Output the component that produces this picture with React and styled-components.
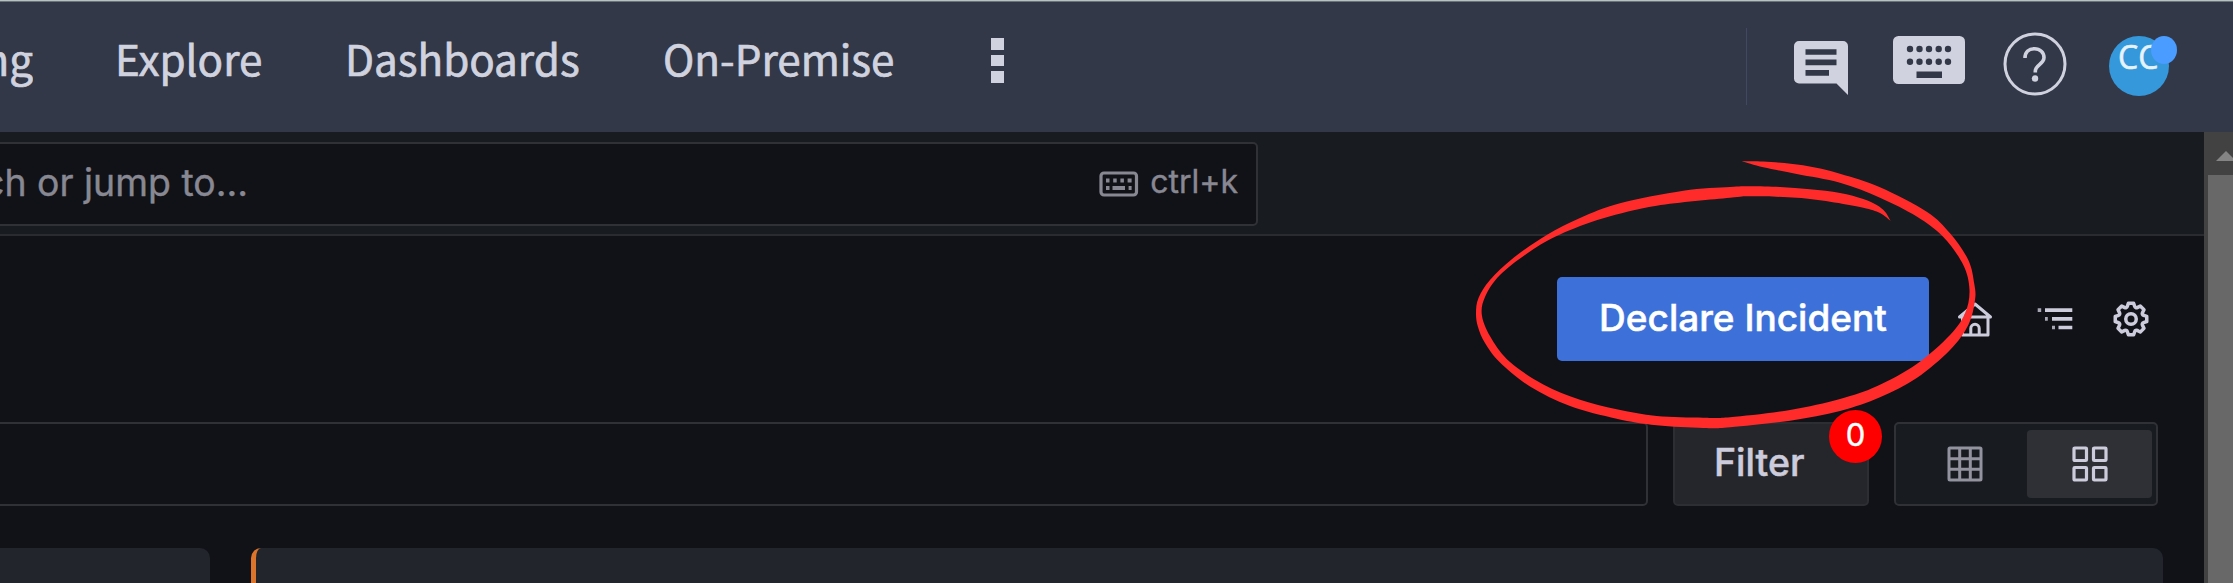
import React from 'react';
import styled, { createGlobalStyle } from 'styled-components';

const GlobalStyle = createGlobalStyle`
  *, *::before, *::after { box-sizing: border-box; }
  body { margin: 0; background: #111217; overflow: hidden; }
`;

const Page = styled.div`
  position: relative;
  display: flex;
  flex-direction: column;
  width: 2233px;
  height: 583px;
  overflow: hidden;
  background: #111217;
  font-family: Inter, 'Liberation Sans', sans-serif;
  color: #ccccdc;
`;

const Nav = styled.nav`
  flex: none;
  display: flex;
  justify-content: space-between;
  height: 132px;
  background: #323848;
  border-top: 1px solid #b7c2c0;
  box-shadow: inset 0 1px 0 #68737a;
`;

const NavLinks = styled.div`
  display: flex;
  align-items: flex-start;
  padding-top: 27px;
`;

const NavLink = styled.a`
  flex: none;
  display: flex;
  justify-content: ${(p) => (p.$clipped ? 'flex-end' : 'flex-start')};
  width: ${(p) => p.$width}px;
  overflow: ${(p) => (p.$clipped ? 'hidden' : 'visible')};
  margin-right: ${(p) => p.$after}px;
  color: #d0d3df;
  font-family: 'Noto Sans CJK SC', 'Open Sans', sans-serif;
  font-size: 42.2px;
  line-height: 60px;
  -webkit-text-stroke: 0.7px #d0d3df;
  white-space: nowrap;
`;

const MoreDots = styled.div`
  display: flex;
  flex-direction: column;
  gap: 5px;
  padding-top: 10px;
`;

const Dot = styled.span`
  width: 13px;
  height: 11.5px;
  background: #d0d3df;
`;

const NavTools = styled.div`
  display: flex;
  align-items: flex-start;
  padding: 27px 64px 0 46px;
`;

const Divider = styled.span`
  width: 1px;
  height: 77px;
  margin-right: 47px;
  background: #3f4961;
`;

const Tool = styled.span`
  flex: none;
  display: flex;
  margin: ${(p) => p.$top}px ${(p) => p.$after}px 0 0;
`;

const Avatar = styled.div`
  position: relative;
  width: 60px;
  height: 60px;
  margin-top: 8px;
  padding-left: 9px;
  border-radius: 50%;
  background: #3598db;
  color: #e6f3fb;
  font-family: 'Open Sans', sans-serif;
  font-size: 32px;
  line-height: 42px;
  -webkit-text-stroke: 0.6px #e6f3fb;
`;

const AvatarStatus = styled.span`
  position: absolute;
  left: 42px;
  top: 0;
  width: 26px;
  height: 28px;
  border-radius: 50%;
  background: #4a9cff;
`;

const Body = styled.div`
  flex: 1;
  display: flex;
  min-height: 0;
`;

const Main = styled.main`
  flex: 1;
  display: flex;
  flex-direction: column;
  min-width: 0;
`;

const SearchBar = styled.div`
  flex: none;
  height: 104px;
  padding-top: 10px;
  background: #181b1f;
  border-bottom: 2px solid #292b30;
`;

const SearchField = styled.div`
  display: flex;
  align-items: center;
  width: 1258px;
  height: 84px;
  padding-right: 18px;
  background: #111217;
  border: 2px solid #303136;
  border-left: 0;
  border-radius: 0 5px 5px 0;
  color: #888893;
`;

const Placeholder = styled.span`
  position: relative;
  top: -1px;
  display: flex;
  justify-content: flex-end;
  width: 248px;
  overflow: hidden;
  font-size: 37.400px;
  line-height: 50px;
  white-space: nowrap;
  -webkit-text-stroke: 0.4px #888893;
`;

const Shortcut = styled.span`
  display: flex;
  align-items: center;
  gap: 11px;
  margin-left: auto;
  font-size: 32px;
  line-height: 40px;
  white-space: nowrap;
  -webkit-text-stroke: 0.4px #888893;
`;

const ShortcutText = styled.span`
  position: relative;
  top: -2.5px;
`;

const TitleRow = styled.div`
  flex: none;
  display: flex;
  justify-content: flex-end;
  align-items: center;
  height: 186px;
  padding: 0 52px 20px 0;
`;

const PrimaryButton = styled.button`
  width: 372px;
  height: 84px;
  margin-right: 28px;
  padding: 0 0 2px;
  border: 0;
  border-radius: 5px;
  background: #3d71d9;
  color: #fff;
  font: 500 37px/80px Inter, sans-serif;
  white-space: nowrap;
  -webkit-text-stroke: 0.5px #fff;
`;

const IconSlot = styled.span`
  display: flex;
  margin-right: ${(p) => p.$after || 0}px;
`;

const FilterRow = styled.div`
  flex: none;
  display: flex;
  height: 84px;
  padding-right: 46px;
`;

const FilterInput = styled.div`
  flex: 1;
  margin-right: 25px;
  border: 2px solid #303136;
  border-left: 0;
  border-radius: 0 5px 5px 0;
`;

const FilterButton = styled.div`
  position: relative;
  width: 196px;
  margin-right: 25px;
  padding-left: 39px;
  border: 2px solid #2d2e33;
  border-radius: 5px;
  background: #25262b;
  font-size: 37.5px;
  font-weight: 500;
  line-height: 78px;
  -webkit-text-stroke: 0.5px #ccccdc;
`;

const CountBadge = styled.span`
  position: absolute;
  left: 154px;
  top: -14px;
  width: 53px;
  height: 53px;
  border-radius: 50%;
  background: #f00;
  color: #fff;
  font-size: 31px;
  font-weight: 400;
  line-height: 49px;
  text-align: center;
  -webkit-text-stroke: 0.4px #fff;
`;

const ViewToggle = styled.div`
  display: flex;
  width: 264px;
  padding: 6px 4px 6px 6px;
  border: 2px solid #303136;
  border-radius: 5px;
  background: #181b1f;
`;

const ViewOption = styled.span`
  flex: 1;
  display: flex;
  align-items: center;
  justify-content: center;
  border-radius: 4px;
  background: ${(p) => (p.$active ? '#2e3035' : 'transparent')};
  color: ${(p) => (p.$active ? '#ccccdc' : '#92939f')};
`;

const Cards = styled.div`
  flex: 1;
  display: flex;
  gap: 41px;
  padding: 42px 41px 0 0;
`;

const Card = styled.div`
  ${(p) => (p.$width ? `width: ${p.$width}px;` : 'flex: 1;')}
  background: #22252b;
  border-left: ${(p) => (p.$accent ? '5px solid #dc752b' : '0')};
  border-radius: ${(p) => (p.$accent ? '10px 10px 0 0' : '0 10px 0 0')};
`;

const Scrollbar = styled.div`
  flex: none;
  display: flex;
  flex-direction: column;
  width: 29px;
  padding-left: 4px;
  overflow: hidden;
  background: #424242;
`;

const ScrollArrow = styled.span`
  flex: none;
  width: 0;
  height: 0;
  margin: 19px 0 14px 8px;
  border: 10px solid transparent;
  border-top: 0;
  border-bottom-color: #858585;
`;

const ScrollThumb = styled.span`
  flex: 1;
  background: #686868;
`;

const Annotation = styled.svg`
  position: absolute;
  left: 0;
  top: 0;
  pointer-events: none;
`;

const ChatIcon = () => (
  <svg width="54" height="54" viewBox="0 0 54 54">
    <path fill="#d0d3df" d="M5 0H49a5 5 0 0 1 5 5V54L42.500 42.500H5a5 5 0 0 1-5-5V5a5 5 0 0 1 5-5Z" />
    <path stroke="#323848" strokeWidth="5.700" d="M11.500 11H42.500M11.500 21.400H42.500M11.500 31.800H35" />
  </svg>
);

const KeyboardIcon = () => (
  <svg width="72" height="48" viewBox="0 0 72 48">
    <rect width="72" height="48" rx="5.500" fill="#d0d3df" />
    {[17, 26.5, 36, 45.7, 55].map((x) => (
      <g key={x} fill="#323848">
        <circle cx={x} cy="13" r="3.200" />
        <circle cx={x} cy="25.700" r="3.200" />
      </g>
    ))}
    <rect x="23.500" y="35.500" width="25.500" height="6.500" fill="#323848" />
  </svg>
);

const HelpIcon = () => (
  <svg width="64" height="64" viewBox="0 0 64 64" fill="none" stroke="#d0d3df">
    <circle cx="32" cy="32" r="30" strokeWidth="3" />
    <path strokeWidth="3.600" d="M22 26C22 20 26 16.700 31.500 16.700S41 20.500 41 25.500C41 32 32.300 33 32.300 39V40.500" />
    <circle cx="32" cy="46.500" r="3.200" fill="#d0d3df" stroke="none" />
  </svg>
);

const SmallKeyboardIcon = () => (
  <svg width="40" height="27" viewBox="0 0 40 27">
    <rect x="2" y="2" width="35.500" height="22" rx="3" fill="none" stroke="currentColor" strokeWidth="3.200" />
    <path stroke="currentColor" strokeWidth="3.800" d="M7 9.500h3.500M14.200 9.500h3.500M21.400 9.500h3.500M28.600 9.500h4M7 17h3.500M13.500 17h12.500M29.600 17h3" />
  </svg>
);

const HomeIcon = () => (
  <svg width="36" height="36" viewBox="0 0 36 36" fill="none" stroke="#ccccdc" strokeWidth="3" strokeLinejoin="round">
    <path d="M2.500 16L18 3L33.500 16Z" />
    <path d="M5.500 17V34H31V17M13.800 34V27.500a4.200 4.200 0 0 1 8.400 0V34" />
  </svg>
);

const ListIcon = () => (
  <svg width="36" height="22" viewBox="0 0 36 22" stroke="#ccccdc" strokeWidth="3.700">
    <path d="M8 2.200H35.300M15 10.900H35.300M21.500 19.500H35.300" />
    <path opacity=".8" d="M.7 2.200H4.200M8 10.900H10.800M15 19.500H18" />
  </svg>
);

const GearIcon = () => (
  <svg width="42" height="42" viewBox="0 0 24 24" fill="#ccccdc">
    <path d="M21.320,9.550l-1.890-.63.890-1.780A1,1,0,0,0,20.130,6L18,3.870a1,1,0,0,0-1.150-.19l-1.780.89-.63-1.890A1,1,0,0,0,13.500,2h-3a1,1,0,0,0-.95.680L8.920,4.570,7.140,3.680A1,1,0,0,0,6,3.870L3.870,6a1,1,0,0,0-.19,1.150l.89,1.780-1.890.63A1,1,0,0,0,2,10.500v3a1,1,0,0,0,.68.950l1.890.63-.89,1.780A1,1,0,0,0,3.870,18L6,20.130a1,1,0,0,0,1.150.19l1.780-.89.630,1.890a1,1,0,0,0,.95.680h3a1,1,0,0,0,.95-.68l.63-1.890,1.780.89A1,1,0,0,0,18,20.130L20.130,18a1,1,0,0,0,.19-1.150l-.89-1.780,1.890-.63A1,1,0,0,0,22,13.500v-3A1,1,0,0,0,21.320,9.550ZM20,12.780l-1.200.4A2,2,0,0,0,17.640,16l.57,1.140-1.100,1.100L16,17.640a2,2,0,0,0-2.790,1.160l-.4,1.200H11.220l-.4-1.200A2,2,0,0,0,8,17.640l-1.140.57-1.100-1.100L6.360,16A2,2,0,0,0,5.200,13.180L4,12.780V11.220l1.200-.4A2,2,0,0,0,6.360,8L5.790,6.890l1.100-1.100L8,6.360A2,2,0,0,0,10.820,5.200l.4-1.200h1.560l.4,1.200A2,2,0,0,0,16,6.360l1.140-.57,1.100,1.100L17.640,8a2,2,0,0,0,1.160,2.790l1.200.4ZM12,8a4,4,0,1,0,4,4A4,4,0,0,0,12,8Zm0,6a2,2,0,1,1,2-2A2,2,0,0,1,12,14Z" />
  </svg>
);

const TableIcon = () => (
  <svg width="36" height="36" viewBox="0 0 36 36" fill="none" stroke="currentColor" strokeWidth="3">
    <rect x="2" y="2" width="32" height="32" rx="1" />
    <path d="M12.700 2V34M23.300 2V34M2 12.700H34M2 23.300H34" />
  </svg>
);

const AppsIcon = () => (
  <svg width="36" height="36" viewBox="0 0 36 36" fill="none" stroke="currentColor" strokeWidth="3.200">
    {[2, 21.5].map((x) => [2, 21.5].map((y) => (
      <rect key={`${x}-${y}`} x={x} y={y} width="12.500" height="12.500" rx=".8" />
    )))}
  </svg>
);

const OUTER_EDGE = [
  [1890.7, 221], [1885, 211.7], [1876.7, 205], [1863.3, 199], [1840, 193], [1810, 189.3], [1780, 187],
  [1750, 186.2], [1730, 187], [1683.3, 190.7], [1620, 203.3], [1580, 218], [1546.7, 235], [1513.3, 258],
  [1490, 280], [1478.5, 298], [1476, 313], [1478, 327], [1485, 343], [1500, 362.5], [1530, 386.5],
  [1570, 406], [1616.7, 418.7], [1656.7, 425.3], [1703.3, 428], [1730, 427.2], [1790, 420.7],
  [1840, 411], [1880, 397.3], [1916.7, 378], [1950, 350], [1968.3, 325], [1975, 300], [1974.3, 284],
  [1968.3, 260], [1950, 233.3], [1926.7, 211.7], [1880, 187.3], [1840, 173.7], [1803, 165.3],
  [1763.3, 161.5], [1741.7, 161.3],
];

const INNER_EDGE = [
  [1741.7, 161.3], [1763.3, 167.3], [1796.7, 174], [1840, 182.7], [1880, 197.7], [1916.7, 216.5],
  [1943.3, 237], [1963.3, 265], [1969.5, 290], [1965, 313.3], [1950, 335], [1916.7, 364],
  [1876.7, 386.3], [1840, 399], [1790, 410], [1730, 417.3], [1703, 417.7], [1656.7, 416],
  [1616.7, 409.3], [1580, 399.7], [1543.3, 384.5], [1510, 362], [1491.7, 339], [1482, 316],
  [1485, 297], [1500, 275], [1530, 251.5], [1560, 234.5], [1603.3, 218.3], [1656.7, 205.7],
  [1730, 197.7], [1753, 196.3], [1796.7, 197.8], [1830, 201.7], [1863.3, 207.7], [1880, 213],
  [1890.7, 221],
];

const spline = (pts) =>
  pts.slice(0, -1).map((p1, i) => {
    const p0 = pts[i - 1] || p1;
    const p2 = pts[i + 1];
    const p3 = pts[i + 2] || p2;
    const c1 = [p1[0] + (p2[0] - p0[0]) / 6, p1[1] + (p2[1] - p0[1]) / 6];
    const c2 = [p2[0] - (p3[0] - p1[0]) / 6, p2[1] - (p3[1] - p1[1]) / 6];
    return `C${c1} ${c2} ${p2}`;
  }).join('');

const circlePath = `M${OUTER_EDGE[0]}${spline(OUTER_EDGE)}${spline(INNER_EDGE)}Z`;

export default function App() {
  return (
    <Page>
      <GlobalStyle />
      <Nav>
        <NavLinks>
          <NavLink $clipped $width={33} $after={82}>ng</NavLink>
          <NavLink $width={148} $after={82}>Explore</NavLink>
          <NavLink $width={236} $after={82}>Dashboards</NavLink>
          <NavLink $width={232} $after={96}>On-Premise</NavLink>
          <MoreDots><Dot /><Dot /><Dot /></MoreDots>
        </NavLinks>
        <NavTools>
          <Divider />
          <Tool $top={13} $after={45}><ChatIcon /></Tool>
          <Tool $top={8} $after={38}><KeyboardIcon /></Tool>
          <Tool $top={3.5} $after={42}><HelpIcon /></Tool>
          <Avatar>CC<AvatarStatus /></Avatar>
        </NavTools>
      </Nav>
      <Body>
        <Main>
          <SearchBar>
            <SearchField>
              <Placeholder>ch or jump to...</Placeholder>
              <Shortcut><SmallKeyboardIcon /><ShortcutText>ctrl+k</ShortcutText></Shortcut>
            </SearchField>
          </SearchBar>
          <TitleRow>
            <PrimaryButton>Declare Incident</PrimaryButton>
            <IconSlot $after={44}><HomeIcon /></IconSlot>
            <IconSlot $after={37}><ListIcon /></IconSlot>
            <IconSlot><GearIcon /></IconSlot>
          </TitleRow>
          <FilterRow>
            <FilterInput />
            <FilterButton>Filter<CountBadge>0</CountBadge></FilterButton>
            <ViewToggle>
              <ViewOption><TableIcon /></ViewOption>
              <ViewOption $active><AppsIcon /></ViewOption>
            </ViewToggle>
          </FilterRow>
          <Cards>
            <Card $width={210} />
            <Card $accent />
          </Cards>
        </Main>
        <Scrollbar>
          <ScrollArrow />
          <ScrollThumb />
        </Scrollbar>
      </Body>
      <Annotation width="2233" height="583" viewBox="0 0 2233 583">
        <path d={circlePath} fill="#ff2b2b" />
      </Annotation>
    </Page>
  );
}
